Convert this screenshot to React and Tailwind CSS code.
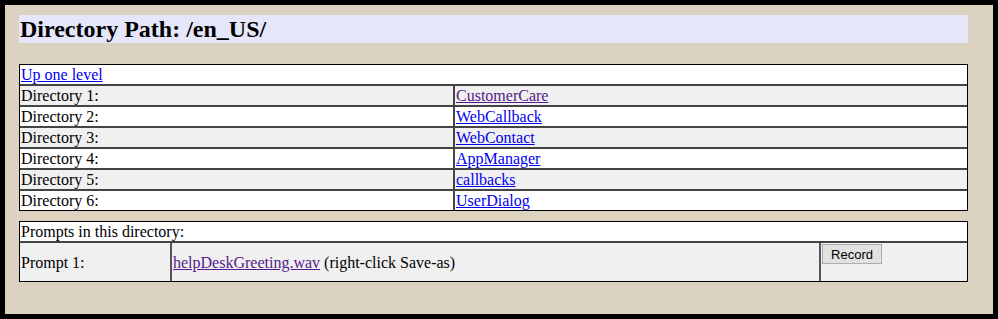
import React from 'react';

const dirs = [
  { label: 'Directory 1:', name: 'CustomerCare', visited: true },
  { label: 'Directory 2:', name: 'WebCallback' },
  { label: 'Directory 3:', name: 'WebContact' },
  { label: 'Directory 4:', name: 'AppManager' },
  { label: 'Directory 5:', name: 'callbacks' },
  { label: 'Directory 6:', name: 'UserDialog' },
];

const App = () => {
  return (
    <div className="w-[998px] h-[319px] bg-black p-[5px]" style={{ fontFamily: '"Liberation Serif", "Times New Roman", serif' }}>
      <div className="w-[988px] h-[309px] bg-[#dcd2c2] pl-[14px] pt-[10px] text-[16px] text-black">
        <div className="w-[949px] h-[28px] bg-[#e6e6fa] pl-[1px] flex items-center">
          <h2 className="text-[24px] font-bold leading-none">Directory Path: /en_US/</h2>
        </div>

        <table className="mt-[21px] w-[949px] border-separate border-spacing-0 border border-black bg-white leading-[19px]">
          <tbody>
            <tr>
              <td colSpan={2} className="h-[19px] px-[1px] border-b-2 border-[#444] bg-white">
                <a href="#" className="text-[#0000ee] underline">Up one level</a>
              </td>
            </tr>
            {dirs.map((d, i) => (
              <tr key={d.label} className={i % 2 === 0 ? 'bg-[#f0f0f0]' : 'bg-white'}>
                <td className={`h-[19px] w-[435px] px-[1px] border-r-2 border-[#444] ${i < dirs.length - 1 ? 'border-b-2' : ''}`}>
                  {d.label}
                </td>
                <td className={`h-[19px] px-[1px] border-[#444] ${i < dirs.length - 1 ? 'border-b-2' : ''}`}>
                  <a href="#" className={d.visited ? 'text-[#551a8b] underline' : 'text-[#0000ee] underline'}>{d.name}</a>
                </td>
              </tr>
            ))}
          </tbody>
        </table>

        <table className="mt-[10px] w-[949px] border-separate border-spacing-0 border border-black bg-white leading-[19px]">
          <tbody>
            <tr>
              <td colSpan={3} className="h-[19px] px-[1px] border-b-2 border-[#444] bg-white">
                Prompts in this directory:
              </td>
            </tr>
            <tr className="bg-[#f0f0f0]">
              <td className="h-[38px] w-[152px] px-[1px] border-r-2 border-[#555]">Prompt 1:</td>
              <td className="h-[38px] w-[649px] px-[1px] border-r-2 border-[#555]">
                <a href="#" className="text-[#551a8b] underline">helpDeskGreeting.wav</a> (right-click Save-as)
              </td>
              <td className="h-[38px] px-[1px] align-top">
                <button
                  type="button"
                  className="mt-[1px] w-[60px] h-[20px] bg-[#e1e1e1] border border-[#adadad] text-[13px] leading-none text-black"
                  style={{ fontFamily: '"Liberation Sans", Arial, sans-serif' }}
                >
                  Record
                </button>
              </td>
            </tr>
          </tbody>
        </table>
      </div>
    </div>
  );
};

export default App;
